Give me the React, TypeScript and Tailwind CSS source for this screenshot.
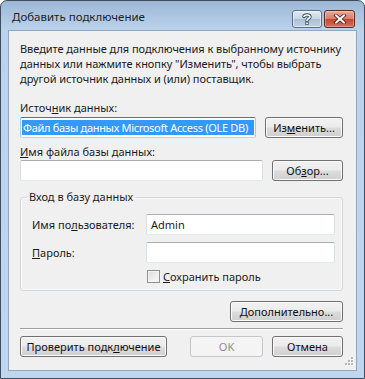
import React from 'react';

const font = { fontFamily: '"Noto Sans", "Open Sans", sans-serif' };

const Btn: React.FC<{ w: string; disabled?: boolean; children: React.ReactNode }> = ({ w, disabled, children }) => (
  <div
    className={`${w} h-[21px] shrink-0 flex items-center justify-center rounded-[3px] border leading-none ${
      disabled
        ? 'border-[#c4c8cb] bg-[#f4f4f4] text-[#8d8d8d]'
        : 'border-[#707070] bg-[linear-gradient(#f2f2f2,#ebebeb_48%,#dddddd_52%,#cfcfcf)] text-[#111] shadow-[inset_0_0_0_1px_#fbfbfb]'
    }`}
  >
    {children}
  </div>
);

const Input: React.FC<{ w: string; children?: React.ReactNode }> = ({ w, children }) => (
  <div className={`${w} h-[21px] shrink-0 flex items-center bg-white border border-[#abadb3] border-l-[#dbdfe6] border-r-[#dbdfe6] border-b-[#e3e9ef] px-[4px] rounded-[2px]`}>
    {children}
  </div>
);

const App: React.FC = () => {
  return (
    <div className="w-[365px] h-[379px] bg-white" style={font}>
      <div className="relative w-[365px] h-[379px] rounded-t-[7px] border border-[#3f4d5c] bg-[linear-gradient(#9cb8d6,#bcd3ec_30px,#bfd6ee)] flex flex-col">
        {/* title bar */}
        <div className="h-[29px] shrink-0 flex items-center pl-[11px] pt-[2px] text-[11.5px] text-[#1e1e1e]">
          Добавить подключение
        </div>
        <div className="absolute top-[9px] right-[42px] w-[30px] h-[18px] rounded-[3px] border border-[#5d6f84] bg-[linear-gradient(#e3ebf4,#c5d4e5_50%,#aebfd4_52%,#c3d3e6)] shadow-[inset_0_0_0_1px_rgba(255,255,255,0.5)] flex items-center justify-center">
          <svg width="10" height="12" viewBox="0 0 10 12">
            <path d="M2 3.5 C2 1.5 8 1.5 8 3.8 C8 5.5 5 5.6 5 7.6" fill="none" stroke="#3b4a5c" strokeWidth="3.4" strokeLinecap="round" />
            <path d="M2 3.5 C2 1.5 8 1.5 8 3.8 C8 5.5 5 5.6 5 7.6" fill="none" stroke="#fff" strokeWidth="1.6" strokeLinecap="round" />
            <rect x="3.3" y="8.8" width="3.4" height="3" fill="#3b4a5c" />
            <rect x="4.1" y="9.5" width="1.8" height="1.6" fill="#fff" />
          </svg>
        </div>
        <div className="absolute top-[9px] right-[9px] w-[31px] h-[18px] rounded-[3px] border border-[#5a2b22] bg-[linear-gradient(#e9a99a,#d77d69_48%,#c3472f_52%,#d4705b)] shadow-[inset_0_0_0_1px_rgba(255,255,255,0.3)] flex items-center justify-center">
          <svg width="14" height="10" viewBox="0 0 14 10">
            <path d="M3 1.5 L11 8.5 M11 1.5 L3 8.5" stroke="#4a1d16" strokeWidth="3.6" strokeLinecap="square" />
            <path d="M3 1.5 L11 8.5 M11 1.5 L3 8.5" stroke="#fff" strokeWidth="2" strokeLinecap="square" />
          </svg>
        </div>

        {/* client area */}
        <div className="relative mx-[7px] h-[341px] shrink-0 border border-[#8fa6bf] bg-[#f0f0f0] text-[11px] text-[#1a1a1a] flex flex-col pl-[11px] pr-[13px] pt-[10px]">
          <div className="leading-[15px] whitespace-nowrap tracking-[-0.05px]">
            Введите данные для подключения к выбранному источнику
            <br />
            данных или нажмите кнопку "Изменить", чтобы выбрать
            <br />
            другой источник данных и (или) поставщик.
          </div>

          <div className="mt-[15px] leading-[14px]">
            Источ<u>н</u>ик данных:
          </div>
          <div className="mt-[2px] flex items-center gap-[9px]">
            <div className="w-[236px] h-[21px] shrink-0 flex items-center bg-white border border-[#3d7bad] border-l-[#a4c9e3] border-r-[#a4c9e3] border-b-[#b7d9ed] px-[1px] rounded-[2px]">
              <div className="h-[15px] w-full bg-[#3399ff] text-white leading-[15px] whitespace-nowrap overflow-hidden pl-[1px] tracking-[-0.3px]">
                Файл базы данных Microsoft Access (OLE DB)
              </div>
            </div>
            <Btn w="w-[78px]">
              Из<u>м</u>енить...
            </Btn>
          </div>

          <div className="mt-[7px] leading-[14px]">
            <u>И</u>мя файла базы данных:
          </div>
          <div className="mt-[1px] flex items-center gap-[9px]">
            <Input w="w-[243px]" />
            <Btn w="w-[71px]">
              Об<u>з</u>ор...
            </Btn>
          </div>

          <fieldset className="mt-[9px] border border-[#d0d7dc] rounded-[3px] shadow-[inset_0_0_0_1px_#fafafa]">
            <legend className="ml-[6px] px-[2px] leading-[14px]">Вход в базу данных</legend>
            <div className="pl-[11px] pr-[7px] pb-[7px]">
              <div className="mt-[10px] flex items-center">
                <div className="w-[114px] leading-[14px]">
                  Имя по<u>л</u>ьзователя:
                </div>
                <Input w="w-[189px]">
                  <span className="leading-[14px]">Admin</span>
                </Input>
              </div>
              <div className="mt-[7px] flex items-center">
                <div className="w-[114px] leading-[14px]">
                  <u>П</u>ароль:
                </div>
                <Input w="w-[189px]" />
              </div>
              <div className="mt-[7px] flex items-center pl-[115px] h-[13px]">
                <div className="w-[13px] h-[13px] border border-[#8e8f8f] bg-[linear-gradient(135deg,#dcdcdc,#fbfbfb)] shadow-[inset_0_0_0_1px_#f4f4f4]" />
                <div className="ml-[3px] leading-[14px]">
                  <u>С</u>охранить пароль
                </div>
              </div>
            </div>
          </fieldset>

          <div className="mt-[10px] flex justify-end">
            <Btn w="w-[113px]">
              <u>Д</u>ополнительно...
            </Btn>
          </div>

          <div className="mt-[6px] h-[2px] border-t border-[#a0a0a0] border-b border-b-white" />

          <div className="mt-[6px] flex items-center">
            <Btn w="w-[147px]">
              Проверить подк<u>л</u>ючение
            </Btn>
            <div className="ml-[23px]">
              <Btn w="w-[73px]" disabled>
                OK
              </Btn>
            </div>
            <div className="ml-[9px]">
              <Btn w="w-[71px]">Отмена</Btn>
            </div>
          </div>

          <svg className="absolute right-[2px] bottom-[2px]" width="11" height="11" viewBox="0 0 11 11">
            {[
              [8, 0], [8, 3], [5, 3], [8, 6], [5, 6], [2, 6],
            ].map(([x, y], i) => (
              <g key={i}>
                <rect x={x + 1} y={y + 1} width="2" height="2" fill="#fff" />
                <rect x={x} y={y} width="2" height="2" fill="#b8b8b8" />
              </g>
            ))}
          </svg>
        </div>
      </div>
    </div>
  );
};

export default App;
